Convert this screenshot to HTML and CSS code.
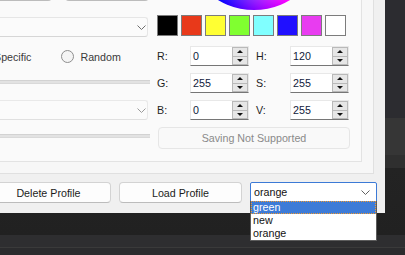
FILE: index.html
```html
<!DOCTYPE html>
<html lang="en">
<head>
<meta charset="UTF-8">
<title>Profiles</title>
<link rel="stylesheet" href="styles.css">
</head>
<body>

<div class="window">
	<div class="tabs">
		<div class="page">

			<!-- left side, cut off by the crop -->
			<div class="left-col">
				<div class="btn-row">
					<span class="btn btn-a"></span>
					<span class="btn btn-b"></span>
				</div>
				<div class="combo combo-wide">
					<svg class="chev" width="9" height="5" viewBox="0 0 9 5"><polyline points="0.5,0.5 4.5,4.5 8.5,0.5" fill="none" stroke="#6e6e6e" stroke-width="1"/></svg>
				</div>
				<div class="radio-row">
					<label class="radio"><span class="dot"></span>Specific</label>
					<label class="radio"><span class="dot"></span>Random</label>
				</div>
				<div class="groove groove-1"></div>
				<div class="combo combo-wide combo-2">
					<svg class="chev" width="9" height="5" viewBox="0 0 9 5"><polyline points="0.5,0.5 4.5,4.5 8.5,0.5" fill="none" stroke="#9a9a9a" stroke-width="1"/></svg>
				</div>
				<div class="groove groove-2"></div>
			</div>

			<!-- colour picker -->
			<div class="color-col">
				<div class="wheel"></div>
				<div class="swatches">
					<span class="sw" style="background:#000000"></span>
					<span class="sw" style="background:#e8391a"></span>
					<span class="sw" style="background:#ffff33"></span>
					<span class="sw" style="background:#80ff30"></span>
					<span class="sw" style="background:#80ffff"></span>
					<span class="sw" style="background:#2010ff"></span>
					<span class="sw" style="background:#e83cf0"></span>
					<span class="sw" style="background:#ffffff"></span>
				</div>
				<div class="spin-grid">
					<span class="lbl">R:</span>
					<div class="spin"><span class="val">0</span><span class="arrows"><i class="up"></i><i class="down"></i></span></div>
					<span class="lbl lbl-r">H:</span>
					<div class="spin"><span class="val">120</span><span class="arrows"><i class="up"></i><i class="down"></i></span></div>

					<span class="lbl">G:</span>
					<div class="spin"><span class="val">255</span><span class="arrows"><i class="up"></i><i class="down"></i></span></div>
					<span class="lbl lbl-r">S:</span>
					<div class="spin"><span class="val">255</span><span class="arrows"><i class="up"></i><i class="down"></i></span></div>

					<span class="lbl">B:</span>
					<div class="spin"><span class="val">0</span><span class="arrows"><i class="up"></i><i class="down"></i></span></div>
					<span class="lbl lbl-r">V:</span>
					<div class="spin"><span class="val">255</span><span class="arrows"><i class="up"></i><i class="down"></i></span></div>
				</div>
				<div class="btn-disabled">Saving Not Supported</div>
			</div>

		</div>
	</div>

	<div class="actions">
		<span class="btn btn-delete">Delete Profile</span>
		<span class="btn btn-load">Load Profile</span>
		<div class="profile-combo">
			<span>orange</span>
			<svg class="chev" width="9" height="5" viewBox="0 0 9 5"><polyline points="0.5,0.5 4.5,4.5 8.5,0.5" fill="none" stroke="#606060" stroke-width="1"/></svg>
			<ul class="popup">
				<li class="sel">green</li>
				<li>new</li>
				<li>orange</li>
			</ul>
		</div>
	</div>
</div>

</body>
</html>
```
FILE: styles.css
```css
*{box-sizing:border-box;}
body{margin:0;width:405px;height:255px;overflow:hidden;font-family:"Segoe UI","Liberation Sans",Arial,sans-serif;font-size:10.7px;color:#1b1b1b;
	background:linear-gradient(to bottom,#2c2c30 0,#2c2c30 118px,#363636 118px,#363636 155px,#2f2f2f 155px,#2f2f2f 168px,#232323 168px,#212121 235px,#2e2e30 235px,#2e2e30 247px,#3a3a3a 247px,#3a3a3a 248px,#2b2b2d 248px);}

.window{width:385px;height:213px;background:#f0f0f0;display:flex;flex-direction:column;}
.tabs{width:374px;height:174px;background:#f7f7f7;border-right:1px solid #e0e0e0;border-bottom:1px solid #e0e0e0;}
.page{width:362px;height:162px;background:#fafafa;border-right:1px solid #e3e3e3;border-bottom:1px solid #e3e3e3;display:flex;gap:7px;}

/* left column */
.left-col{width:150px;display:flex;flex-direction:column;}
.btn-row{display:flex;gap:13px;margin:-19px 0 0 -18px;height:20px;}
.btn{display:flex;align-items:center;justify-content:center;height:100%;background:#fdfdfd;border:1px solid #d3d3d3;border-bottom-color:#bcbcbc;border-radius:4px;color:#1b1b1b;}
.btn-a{width:70px;}
.btn-b{width:84px;}
.combo{height:20px;display:flex;align-items:center;justify-content:flex-end;background:#fbfbfb;border:1px solid #e6e6e6;border-bottom-color:#d6d6d6;border-radius:3px;padding-right:1px;}
.combo-wide{width:158px;margin:16px 0 0 -10px;}
.combo-2{border-color:#e9e9e9;border-bottom-color:#e0e0e0;}
.chev{display:block;}
.radio-row{display:flex;align-items:center;height:13px;margin:13px 0 0 -25px;gap:30px;color:#3a3a3a;}
.radio{display:flex;align-items:center;gap:6px;}
.dot{width:13px;height:13px;border-radius:50%;border:1px solid #8e8e8e;background:#f4f4f4;}
.groove{width:160px;height:4px;margin-left:-10px;background:#e2e2e2;border-top:1px solid #d2d2d2;border-bottom:1px solid #d9d9d9;}
.groove-1{margin-top:17px;}
.groove-2{margin-top:14px;}

/* colour picker */
.color-col{width:193px;display:flex;flex-direction:column;}
.wheel{width:140px;height:140px;margin-top:-130px;align-self:center;border-radius:50%;
	background:radial-gradient(closest-side,#ffffff,rgba(255,255,255,0)),
	conic-gradient(#80ff00 0deg,#ffff00 30deg,#ff0000 90deg,#ff00ff 150deg,#0000ff 210deg,#00ffff 270deg,#00ff00 330deg,#80ff00 360deg);}
.swatches{display:flex;gap:3px;margin-top:5px;}
.sw{width:21px;height:21px;border:1px solid #7c7c7c;}
.spin-grid{display:grid;grid-template-columns:33px 59px 41px 59px;row-gap:7px;margin-top:10px;}
.lbl{display:flex;align-items:center;height:20px;color:#1e1e1e;}
.lbl-r{padding-left:7px;}
.spin{display:flex;height:20px;background:#fff;border:1px solid #e8e8e8;border-bottom-color:#767676;}
.val{flex:1;padding-left:2px;line-height:18px;color:#101a3c;}
.arrows{width:16px;display:flex;flex-direction:column;background:#e6e6e6;border:1px solid #b9b9b9;}
.arrows i{flex:1;display:flex;align-items:center;justify-content:center;}
.arrows i + i{border-top:1px solid #b9b9b9;}
.arrows i::after{content:"";border-left:3px solid transparent;border-right:3px solid transparent;}
.up::after{border-bottom:3px solid #111;}
.down::after{border-top:3px solid #111;}
.btn-disabled{height:22px;margin:7px 0 0 1px;display:flex;align-items:center;justify-content:center;background:#f9f9f9;border:1px solid #e6e6e6;border-radius:4px;color:#8a8a8a;}

/* bottom actions */
.actions{display:flex;gap:8px;height:21px;margin:8px 0 0 -14px;}
.btn-delete{width:125px;}
.btn-load{width:123px;}
.profile-combo{position:relative;width:127px;height:20px;display:flex;align-items:center;justify-content:space-between;padding:0 6px 0 3px;background:#fff;border:1px solid #3c7ad6;border-radius:2px 2px 0 0;color:#111;}
.popup{position:absolute;top:100%;left:-1px;right:-1px;margin:0;padding:0;list-style:none;background:#fff;border:1px solid #5c5c5c;border-top:none;}
.popup li{height:13px;line-height:13px;padding-left:2px;color:#111;}
.popup li.sel{background:#3d7bd7;color:#fff;outline:1px dotted #f09a30;outline-offset:-1px;}
```
